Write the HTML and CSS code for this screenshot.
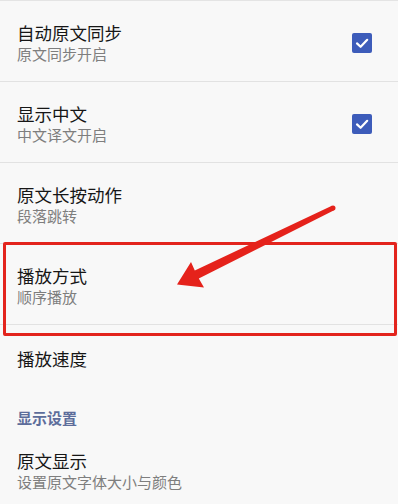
FILE: index.html
```html
<!DOCTYPE html>
<html lang="zh-CN">
<head>
<meta charset="utf-8">
<title>设置</title>
<link rel="stylesheet" href="styles.css">
</head>
<body>
<div class="page">
  <div class="list">
    <div class="item">
      <div class="text">
        <div class="title">自动原文同步</div>
        <div class="sub">原文同步开启</div>
      </div>
      <span class="check"><svg viewBox="0 0 20 20" width="20" height="20"><path d="M5 10.4 L8.6 13.8 L15.2 6.8" fill="none" stroke="#fff" stroke-width="2.2" stroke-linecap="round" stroke-linejoin="round"/></svg></span>
    </div>
    <div class="item">
      <div class="text">
        <div class="title">显示中文</div>
        <div class="sub">中文译文开启</div>
      </div>
      <span class="check"><svg viewBox="0 0 20 20" width="20" height="20"><path d="M5 10.4 L8.6 13.8 L15.2 6.8" fill="none" stroke="#fff" stroke-width="2.2" stroke-linecap="round" stroke-linejoin="round"/></svg></span>
    </div>
    <div class="item">
      <div class="text">
        <div class="title">原文长按动作</div>
        <div class="sub">段落跳转</div>
      </div>
    </div>
    <div class="item">
      <div class="text">
        <div class="title">播放方式</div>
        <div class="sub">顺序播放</div>
      </div>
    </div>
    <div class="item single">
      <div class="text">
        <div class="title">播放速度</div>
      </div>
    </div>
    <div class="category">显示设置</div>
    <div class="item last">
      <div class="text">
        <div class="title">原文显示</div>
        <div class="sub">设置原文字体大小与颜色</div>
      </div>
    </div>
  </div>
  <div class="highlight"></div>
  <svg class="arrow" viewBox="0 0 417 504" width="417" height="504">
    <polygon points="331.9,205.8 194.8,270.4 191,262 177,284.5 204,287.5 198.8,278.4 334.1,210.2" fill="#e5221b"/>
    <circle cx="333" cy="208" r="2.5" fill="#e5221b"/>
  </svg>
</div>
</body>
</html>
```

FILE: styles.css
```css
html, body {
  margin: 0;
  padding: 0;
  background: #ffffff;
}
body {
  font-family: "Noto Sans CJK SC", "Noto Sans", sans-serif;
  width: 417px;
  height: 504px;
  overflow: hidden;
}
.page {
  position: relative;
  width: 417px;
  height: 504px;
}
.list {
  width: 398px;
  height: 504px;
  background: #f8f8f8;
  border-top: 1px solid #e4e4e4;
  box-sizing: border-box;
}
.item {
  display: flex;
  align-items: center;
  padding: 20px 26px 17px 17px;
  border-bottom: 1px solid #e2e2e2;
}
.item.single {
  border-bottom: none;
  padding-top: 22px;
  padding-bottom: 16px;
}
.item.last {
  border-bottom: none;
  padding-top: 21px;
}
.text {
  flex: 1;
}
.title {
  font-size: 17.5px;
  line-height: 23px;
  color: #161616;
}
.sub {
  font-size: 15px;
  line-height: 20px;
  color: #7e7e7e;
}
.check {
  width: 20px;
  height: 20px;
  border-radius: 2px;
  background: #3d5cba;
  display: flex;
}
.category {
  font-size: 15px;
  line-height: 20px;
  font-weight: bold;
  color: #5d6d9b;
  padding: 22px 17px 0;
}
.highlight {
  position: absolute;
  left: 3px;
  top: 242px;
  width: 394px;
  height: 94px;
  box-sizing: border-box;
  border: 3.5px solid #e3241d;
  border-radius: 2px;
}
.arrow {
  position: absolute;
  left: 0;
  top: 0;
  pointer-events: none;
}
```
